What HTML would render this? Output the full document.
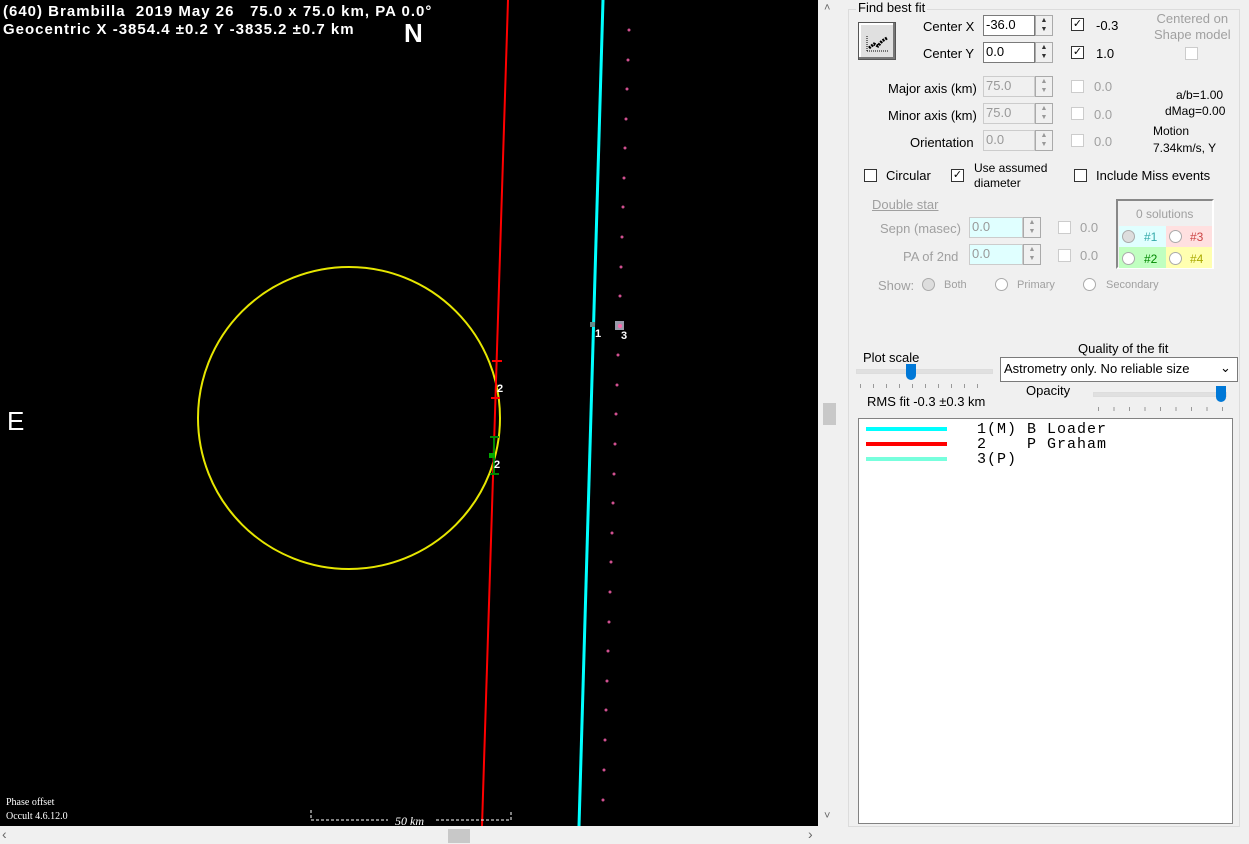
<!DOCTYPE html><html><head><style>
body{margin:0;width:1249px;height:844px;background:#f0f0f0;position:relative;overflow:hidden;font-family:"Liberation Sans",sans-serif;font-size:13px;color:#000}
.a{position:absolute}
.t{position:absolute;white-space:nowrap}
.g{color:#a0a0a0}
.in{position:absolute;background:#fff;border:1px solid #7a7a7a;height:21px;box-sizing:border-box;font-size:13px;padding:1px 2px}
.dis{background:#f0f0f0;border-color:#ccc;color:#999}
.cy{background:#e0ffff;border-color:#ccc;color:#999}
.sp{position:absolute;width:18px;height:21px;box-sizing:border-box;border:1px solid #aaa;background:#f0f0f0;font-size:7px;line-height:9px;text-align:center;color:#333}
.cb{position:absolute;width:13px;height:13px;border:1px solid #333;background:#fff;box-sizing:border-box;font-size:11px;line-height:11px;text-align:center}
.cbd{border-color:#ccc}
.rd{position:absolute;width:13px;height:13px;border:1px solid #aaa;border-radius:50%;background:#fff;box-sizing:border-box}
</style></head><body>
<div class="a" style="left:0;top:0;width:818px;height:826px;background:#000"></div>
<svg class="a" style="left:0;top:0" width="818" height="826">
<circle cx="349" cy="418" r="151" fill="none" stroke="#e6e600" stroke-width="2"/>
<line x1="508" y1="0" x2="482" y2="826" stroke="#f00" stroke-width="2"/>
<line x1="603" y1="0" x2="579" y2="826" stroke="#0ff" stroke-width="3"/>
<g fill="#d05090">
<circle cx="629" cy="30" r="1.5"/><circle cx="628" cy="60" r="1.5"/><circle cx="627" cy="89" r="1.5"/><circle cx="626" cy="119" r="1.5"/><circle cx="625" cy="148" r="1.5"/><circle cx="624" cy="178" r="1.5"/><circle cx="623" cy="207" r="1.5"/><circle cx="622" cy="237" r="1.5"/><circle cx="621" cy="267" r="1.5"/><circle cx="620" cy="296" r="1.5"/><circle cx="618" cy="355" r="1.5"/><circle cx="617" cy="385" r="1.5"/><circle cx="616" cy="414" r="1.5"/><circle cx="615" cy="444" r="1.5"/><circle cx="614" cy="474" r="1.5"/><circle cx="613" cy="503" r="1.5"/><circle cx="612" cy="533" r="1.5"/><circle cx="611" cy="562" r="1.5"/><circle cx="610" cy="592" r="1.5"/><circle cx="609" cy="622" r="1.5"/><circle cx="608" cy="651" r="1.5"/><circle cx="607" cy="681" r="1.5"/><circle cx="606" cy="710" r="1.5"/><circle cx="605" cy="740" r="1.5"/><circle cx="604" cy="770" r="1.5"/><circle cx="603" cy="800" r="1.5"/>
</g>
<rect x="615" y="321" width="9" height="9" fill="#99a" /><circle cx="620" cy="326" r="2" fill="#f6a"/>
<rect x="590" y="322" width="5" height="5" fill="#688"/>
<path d="M492 361h10M491 398h9" stroke="#f00" stroke-width="2"/>
<path d="M490 437h9M490 474h9M494 437v37" stroke="#080" stroke-width="2"/>
<rect x="489" y="453" width="6" height="5" fill="#0a0"/>
<g fill="#fff" font-family="Liberation Sans" font-size="11" font-weight="bold"><text x="497" y="392">2</text><text x="494" y="468">2</text><text x="595" y="337">1</text><text x="621" y="339">3</text></g>
<path d="M311 810v10h200v-10" fill="none" stroke="#fff" stroke-dasharray="3 2"/>
<rect x="388" y="812" width="48" height="12" fill="#000"/>
<text x="395" y="825" fill="#fff" font-family="Liberation Serif" font-style="italic" font-size="12">50 km</text>
</svg>
<div class="t" style="left:3px;top:3px;color:#fff;font-weight:bold;font-size:15px;line-height:18px;letter-spacing:1px;white-space:pre">(640) Brambilla  2019 May 26   75.0 x 75.0 km, PA 0.0°
Geocentric X -3854.4 ±0.2 Y -3835.2 ±0.7 km</div>
<div class="t" style="left:404px;top:18px;color:#fff;font-size:26px;font-weight:bold">N</div>
<div class="t" style="left:7px;top:406px;color:#fff;font-size:26px">E</div>
<div class="t" style="left:6px;top:796px;color:#fff;font-family:'Liberation Serif';font-size:10px;line-height:14px">Phase offset<br>Occult 4.6.12.0</div>
<div class="a" style="left:818px;top:0;width:22px;height:826px;background:#f0f0f0"></div>
<div class="a" style="left:823px;top:403px;width:13px;height:22px;background:#c8c8c8"></div>
<div class="t" style="left:824px;top:2px;color:#666;font-size:11px">˄</div>
<div class="t" style="left:824px;top:810px;color:#666;font-size:11px">˅</div>
<div class="a" style="left:448px;top:829px;width:22px;height:14px;background:#c8c8c8"></div>
<div class="t" style="left:2px;top:826px;color:#666;font-size:14px">‹</div>
<div class="t" style="left:808px;top:826px;color:#666;font-size:14px">›</div>
<div class="a" style="left:848px;top:9px;width:392px;height:818px;border:1px solid #dcdcdc;box-sizing:border-box"></div>
<div class="t" style="left:856px;top:0px;background:#f0f0f0;padding:0 2px">Find best fit</div>
<div class="a" style="left:858px;top:22px;width:38px;height:38px;background:#e0e0e0;border:1px solid #555;box-sizing:border-box;box-shadow:inset -2px -2px #777,inset 2px 2px #fff"><svg width="36" height="36"><path d="M8 28V12M8 28h22" stroke="#000" stroke-dasharray="1 1"/><path d="M10 25l5-4 4 2 4-5 5-3" stroke="#000" stroke-width="3" fill="none" stroke-dasharray="2 1"/></svg></div>
<div class="t" style="left:923px;top:19px">Center X</div>
<div class="t" style="left:923px;top:46px">Center Y</div>
<div class="in" style="left:983px;top:15px;width:52px">-36.0</div><div class="sp" style="left:1035px;top:15px">▲<br>▼</div>
<div class="in" style="left:983px;top:42px;width:52px">0.0</div><div class="sp" style="left:1035px;top:42px">▲<br>▼</div>
<div class="cb" style="left:1071px;top:18px">✓</div><div class="t" style="left:1096px;top:18px">-0.3</div>
<div class="cb" style="left:1071px;top:46px">✓</div><div class="t" style="left:1096px;top:46px">1.0</div>
<div class="t g" style="left:1154px;top:11px;text-align:center;line-height:16px">Centered on<br>Shape model</div>
<div class="cb cbd" style="left:1185px;top:47px"></div>
<div class="t" style="left:888px;top:81px">Major axis (km)</div>
<div class="t" style="left:888px;top:108px">Minor axis (km)</div>
<div class="t" style="left:910px;top:135px">Orientation</div>
<div class="in dis" style="left:983px;top:76px;width:52px">75.0</div><div class="sp dis" style="left:1035px;top:76px;color:#999">▲<br>▼</div>
<div class="in dis" style="left:983px;top:103px;width:52px">75.0</div><div class="sp dis" style="left:1035px;top:103px;color:#999">▲<br>▼</div>
<div class="in dis" style="left:983px;top:130px;width:52px">0.0</div><div class="sp dis" style="left:1035px;top:130px;color:#999">▲<br>▼</div>
<div class="cb cbd" style="left:1071px;top:80px"></div><div class="t g" style="left:1094px;top:79px">0.0</div>
<div class="cb cbd" style="left:1071px;top:107px"></div><div class="t g" style="left:1094px;top:107px">0.0</div>
<div class="cb cbd" style="left:1071px;top:134px"></div><div class="t g" style="left:1094px;top:134px">0.0</div>
<div class="t" style="left:1176px;top:88px;font-size:12px">a/b=1.00</div>
<div class="t" style="left:1165px;top:104px;font-size:12px">dMag=0.00</div>
<div class="t" style="left:1153px;top:123px;font-size:12px;line-height:17px">Motion<br>7.34km/s, Y</div>
<div class="cb" style="left:864px;top:169px"></div><div class="t" style="left:886px;top:168px">Circular</div>
<div class="cb" style="left:951px;top:169px">✓</div><div class="t" style="left:974px;top:161px;font-size:12px;line-height:15px">Use assumed<br>diameter</div>
<div class="cb" style="left:1074px;top:169px"></div><div class="t" style="left:1096px;top:168px">Include Miss events</div>
<div class="t g" style="left:872px;top:197px;text-decoration:underline">Double star</div>
<div class="t g" style="left:880px;top:221px">Sepn (masec)</div>
<div class="t g" style="left:903px;top:249px">PA of 2nd</div>
<div class="in cy" style="left:969px;top:217px;width:54px">0.0</div><div class="sp" style="left:1023px;top:217px;color:#999">▲<br>▼</div>
<div class="in cy" style="left:969px;top:244px;width:54px">0.0</div><div class="sp" style="left:1023px;top:244px;color:#999">▲<br>▼</div>
<div class="cb cbd" style="left:1058px;top:221px"></div><div class="t g" style="left:1080px;top:220px">0.0</div>
<div class="cb cbd" style="left:1058px;top:249px"></div><div class="t g" style="left:1080px;top:248px">0.0</div>
<div class="a" style="left:1116px;top:199px;width:98px;height:70px;border:2px solid #888;border-right-color:#fff;border-bottom-color:#fff;box-sizing:border-box"></div>
<div class="t g" style="left:1136px;top:207px;font-size:12px">0 solutions</div>
<div class="a" style="left:1119px;top:226px;width:47px;height:21px;background:#e0ffff"></div>
<div class="a" style="left:1166px;top:226px;width:46px;height:21px;background:#ffe0e0"></div>
<div class="a" style="left:1119px;top:247px;width:47px;height:21px;background:#c0ffc0"></div>
<div class="a" style="left:1166px;top:247px;width:46px;height:21px;background:#ffffb0"></div>
<div class="rd" style="left:1122px;top:230px;background:#ddd"></div><div class="t" style="left:1144px;top:230px;font-size:12px;color:#3aa">#1</div>
<div class="rd" style="left:1169px;top:230px"></div><div class="t" style="left:1190px;top:230px;font-size:12px;color:#c44">#3</div>
<div class="rd" style="left:1122px;top:252px"></div><div class="t" style="left:1144px;top:252px;font-size:12px;color:#080">#2</div>
<div class="rd" style="left:1169px;top:252px"></div><div class="t" style="left:1190px;top:252px;font-size:12px;color:#aa0">#4</div>
<div class="t g" style="left:878px;top:278px">Show:</div>
<div class="rd" style="left:922px;top:278px;background:#ddd"></div><div class="t g" style="left:944px;top:279px;font-size:11px">Both</div>
<div class="rd" style="left:995px;top:278px"></div><div class="t g" style="left:1017px;top:279px;font-size:11px">Primary</div>
<div class="rd" style="left:1083px;top:278px"></div><div class="t g" style="left:1106px;top:279px;font-size:11px">Secondary</div>
<div class="t" style="left:1078px;top:341px">Quality of the fit</div>
<div class="t" style="left:863px;top:350px">Plot scale</div>
<div class="a" style="left:856px;top:369px;width:135px;height:3px;background:#e0e0e0;border:1px solid #ddd"></div>
<div class="a" style="left:906px;top:364px;width:10px;height:16px;background:#0078d7;border-radius:0 0 5px 5px"></div>
<div class="a" style="left:860px;top:384px;width:128px;height:4px;background:repeating-linear-gradient(90deg,#999 0 1px,transparent 1px 13px)"></div>
<div class="a" style="left:1000px;top:357px;width:238px;height:25px;border:1px solid #7a7a7a;background:#fff;box-sizing:border-box"></div>
<div class="t" style="left:1004px;top:361px">Astrometry only. No reliable size</div>
<div class="t" style="left:1220px;top:360px">⌄</div>
<div class="t" style="left:1026px;top:383px">Opacity</div>
<div class="a" style="left:1093px;top:392px;width:132px;height:3px;background:#e0e0e0;border:1px solid #ddd"></div>
<div class="a" style="left:1216px;top:386px;width:10px;height:16px;background:#0078d7;border-radius:0 0 5px 5px"></div>
<div class="a" style="left:1098px;top:407px;width:125px;height:4px;background:repeating-linear-gradient(90deg,#999 0 1px,transparent 1px 15.5px)"></div>
<div class="t" style="left:867px;top:394px">RMS fit -0.3 ±0.3 km</div>
<div class="a" style="left:858px;top:418px;width:375px;height:406px;background:#fff;border:1px solid #828282;box-sizing:border-box"></div>
<div class="a" style="left:866px;top:427px;width:81px;height:4px;background:#0ff"></div>
<div class="a" style="left:866px;top:442px;width:81px;height:4px;background:#f00"></div>
<div class="a" style="left:866px;top:457px;width:81px;height:4px;background:#7fd"></div>
<div class="t" style="left:977px;top:422px;font-family:'Liberation Mono';font-size:15px;letter-spacing:1px;line-height:15px;white-space:pre">1(M) B Loader
2    P Graham
3(P)</div>
</body></html>
